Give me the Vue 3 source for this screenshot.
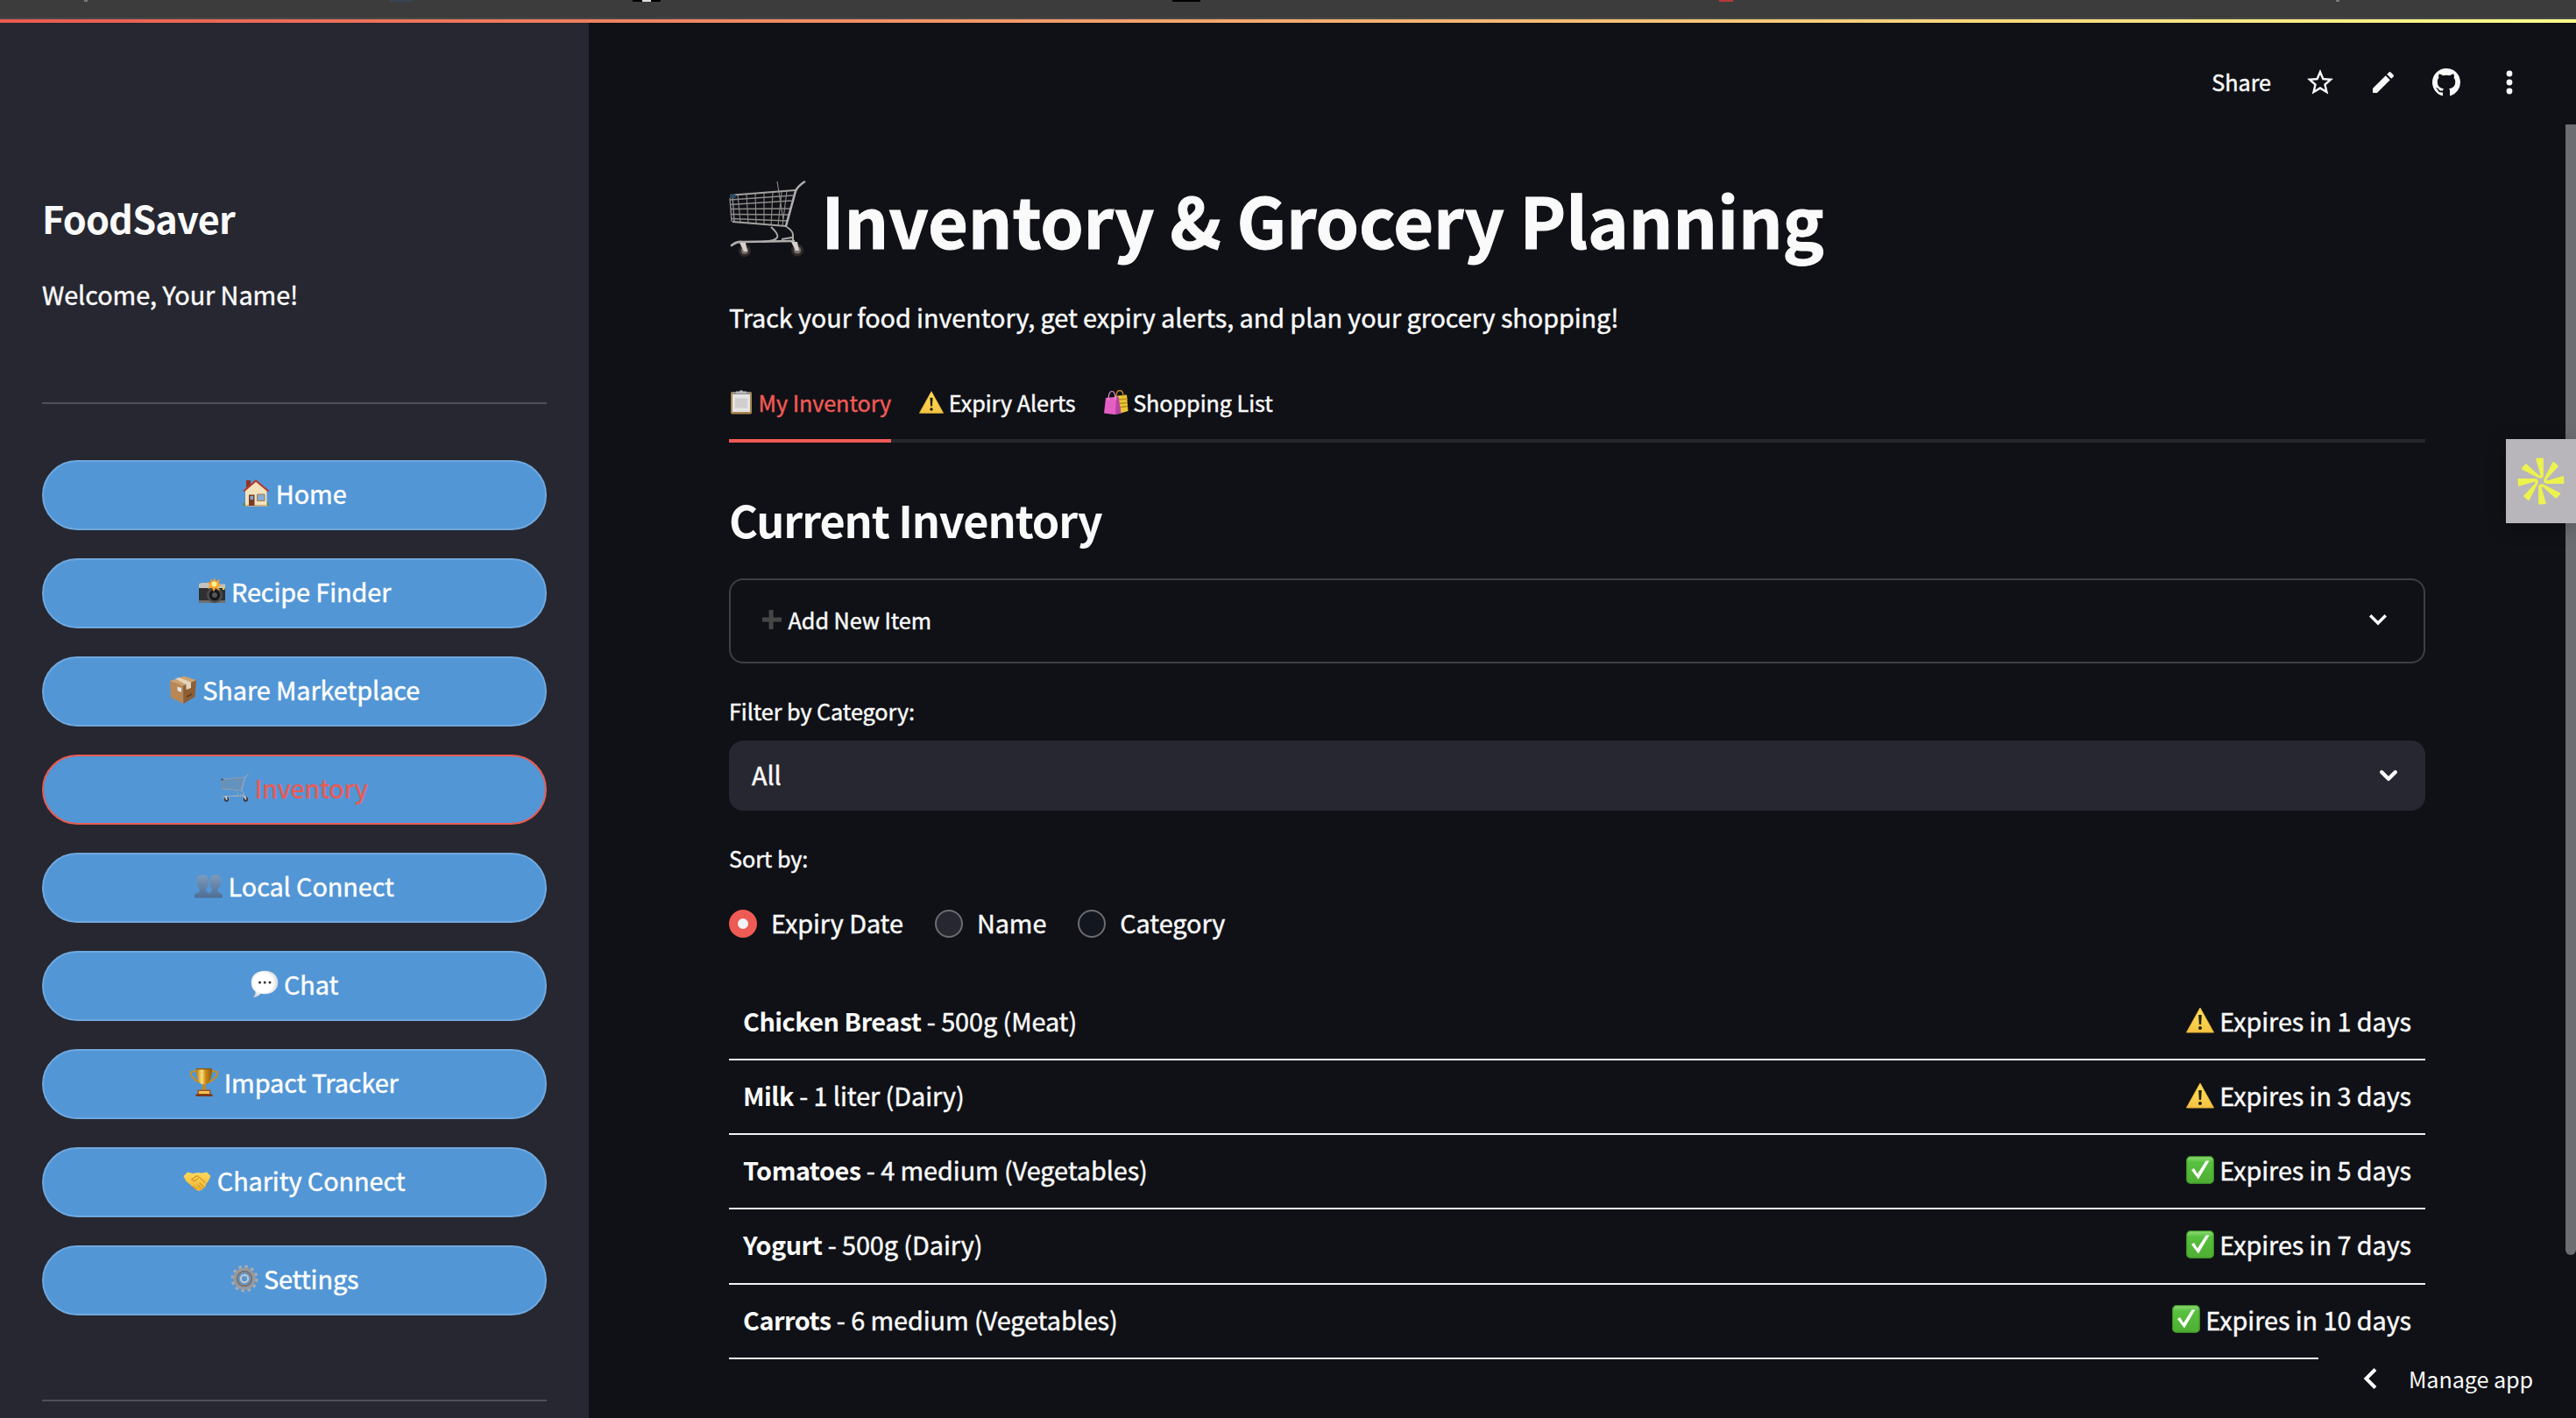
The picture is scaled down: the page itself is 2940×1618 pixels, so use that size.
<script setup>
import { ref } from 'vue'

const navItems = [
  { icon: 'house', label: 'Home' },
  { icon: 'camera', label: 'Recipe Finder' },
  { icon: 'box', label: 'Share Marketplace' },
  { icon: 'cart', label: 'Inventory' },
  { icon: 'people', label: 'Local Connect' },
  { icon: 'speech', label: 'Chat' },
  { icon: 'trophy', label: 'Impact Tracker' },
  { icon: 'handshake', label: 'Charity Connect' },
  { icon: 'gear', label: 'Settings' },
]
const activeNav = ref('Inventory')

const tabs = [
  { icon: 'clipboard', label: 'My Inventory' },
  { icon: 'warning', label: 'Expiry Alerts' },
  { icon: 'bags', label: 'Shopping List' },
]
const activeTab = ref('My Inventory')

const sortOptions = ['Expiry Date', 'Name', 'Category']
const sortBy = ref('Expiry Date')

const items = [
  { name: 'Chicken Breast', detail: '500g (Meat)', days: 1 },
  { name: 'Milk', detail: '1 liter (Dairy)', days: 3 },
  { name: 'Tomatoes', detail: '4 medium (Vegetables)', days: 5 },
  { name: 'Yogurt', detail: '500g (Dairy)', days: 7 },
  { name: 'Carrots', detail: '6 medium (Vegetables)', days: 10 },
]
const statusIcon = (days) => (days <= 3 ? 'warning' : 'check')
</script>

<template>
  <div class="page">
    <svg class="sprite" width="0" height="0" aria-hidden="true">
      <defs>
        <linearGradient id="gGold" x1="0" y1="0" x2="1" y2="0"><stop offset="0" stop-color="#b9780f" /><stop offset=".35" stop-color="#ffe27a" /><stop offset=".6" stop-color="#c98a16" /><stop offset="1" stop-color="#8f5a0c" /></linearGradient>
        <linearGradient id="gGreen" x1="0" y1="0" x2="0" y2="1"><stop offset="0" stop-color="#8fdc76" /><stop offset=".22" stop-color="#58c03f" /><stop offset="1" stop-color="#4fae33" /></linearGradient>
        <linearGradient id="gWarn" x1="0" y1="0" x2="0" y2="1"><stop offset="0" stop-color="#ffe35c" /><stop offset="1" stop-color="#f5c242" /></linearGradient>
        <linearGradient id="gPeople" x1="0" y1="0" x2="0" y2="1"><stop offset="0" stop-color="#7c9cbc" /><stop offset="1" stop-color="#4e6d95" /></linearGradient>
        <radialGradient id="gBubble" cx=".45" cy=".45" r=".6"><stop offset=".6" stop-color="#ffffff" /><stop offset="1" stop-color="#c9c9cf" /></radialGradient>
        <linearGradient id="gHand" x1="0" y1="0" x2="0" y2="1"><stop offset="0" stop-color="#ffd95c" /><stop offset="1" stop-color="#efb32f" /></linearGradient>
      </defs>
      <symbol id="cart" viewBox="0 0 88 88">
        <g fill="none" stroke="#8f8c8a" stroke-width="1.4">
          <path d="M1 22 73 17M1 27.500 71.500 23M2 32.500 70 32M2.500 38.500 68.500 39M3 43.500 67 46" />
          <path d="M10 16 13 48M20 15.500 22 49M30 15 31 50M40 14 40 51M50 13.500 48 51M60 13 56 52M66 12 61 52M55 1 62 45" stroke-width="1.100" />
          <path d="M4 17 6 47M1 20 3 47" />
        </g>
        <path d="M5 16.500 76 11M4 47 65 52" fill="none" stroke="#a5a29f" stroke-width="2" />
        <path d="M65 52 76 12Q78 7 86 1.500" fill="none" stroke="#b0aeab" stroke-width="2.600" stroke-linecap="round" />
        <path d="M48 53Q57 61 55 65Q53 69 38 70M66 53Q74 58 73 64V69M60 67 72 65" fill="none" stroke="#aaa7a5" stroke-width="2" />
        <path d="M3 74Q9 69 16 70L74 69" fill="none" stroke="#b0aeac" stroke-width="2.600" stroke-linecap="round" />
        <circle cx="18" cy="80" r="5.500" fill="#77706c" stroke="#2e2a29" stroke-width="3" />
        <circle cx="78" cy="79.500" r="5.500" fill="#77706c" stroke="#2e2a29" stroke-width="3" />
        <path d="M12 71h7l2 10h-4zM71 70h7l2 10h-4z" fill="#d6cfca" />
        <path d="M1 15.500h6.500v4.500H1z" fill="#2c4a63" />
      </symbol>
      <symbol id="house" viewBox="0 0 32 32">
        <path d="M1.500 30q0-4 4-4v4zM26 30q0-5 4.500-3.500v3.500z" fill="#5f9130" />
        <path d="M5 1h5v10H5z" fill="#8e342b" />
        <path d="M4 13 16 2.500 28.500 13v17.500H4z" fill="#f3e2bb" />
        <path d="M4 29h25v1.800H4z" fill="#c8ac86" />
        <path d="M2 13.500 16 1.500 30.500 13.500" fill="none" stroke="#b8392d" stroke-width="2.200" stroke-linejoin="round" />
        <path d="M8 17.500h6.500V30H8z" fill="#7a3b25" />
        <path d="M9.500 19h3.500v4H9.500z" fill="#7ba8d4" />
        <path d="M17.500 17h8.500v7.500h-8.500z" fill="#86aed6" stroke="#9c7a5b" />
      </symbol>
      <symbol id="camera" viewBox="0 0 32 32">
        <path d="M1 8h30v20.500H1z" fill="#2f3031" />
        <path d="M1 12V7.500L4 6h8l2 1.500h17V12z" fill="#c4c3c0" />
        <path d="M1 26h30v3H1z" fill="#6f6f70" />
        <circle cx="19" cy="20" r="9" fill="#4c4c4d" />
        <circle cx="19" cy="20" r="6.300" fill="#171819" />
        <circle cx="19" cy="20" r="3" fill="#56575b" />
        <path d="M18.500 0 20.500 4.500 25 1.500 23.500 6.500 27 9 23 10 25 15 20 12 18 16.500 16 11.500 11 13 13.500 9 10.500 5.500 15 5.500 14 1.500 17.500 4z" fill="#f7a42c" />
        <circle cx="18.500" cy="7.500" r="3" fill="#fff08f" />
        <path d="M28 11.500h2.500v2.500H28z" fill="#f1cc3a" />
      </symbol>
      <symbol id="box" viewBox="0 0 32 32">
        <path d="M1 6 16 11.500 16.500 32 2 25z" fill="#b98754" />
        <path d="M16 11.500 31 5 29.500 24 16.500 32z" fill="#8f5f33" />
        <path d="M1 6 17 .5 31 5 16 11.500z" fill="#d0a06b" />
        <path d="M7 3.500 11.500 2 25 7.500V14l-5.500 2V10z" fill="#e3d5bd" />
        <path d="M9.500 12.500 14 14v5l-4.500-2z" fill="#dfe5ea" />
        <path d="M20 23l6-3v2l-6 3z" fill="#5f3e20" />
      </symbol>
      <symbol id="people" viewBox="0 0 32 32">
        <g fill="url(#gPeople)">
          <path d="M9 3C4.500 3 2 6.500 2.500 11 3 15 5 18 6 20.500 6 24 0 24 0 27v2.500h16.500L16 24q-3-1-3-4C15 17 16 14 16 10 16 6 13 3 9 3z" />
          <path d="M23.500 3C19 3 17 6.500 17 11c.5 4 2 7 3 9 0 4-5 4-5 7v2.500h17V27c0-3-6-3-6-6.500 2-3 4.500-5.500 4.500-10C30.500 6 28 3 23.500 3z" />
        </g>
      </symbol>
      <symbol id="speech" viewBox="0 0 32 32">
        <path d="M16 .8C7 .8.700 6 .700 14c0 5 2 8.500 5 10.700 0 2-1 4.500-3 6.300 4 0 7-2 8.500-4.300 1.500.3 3 .5 4.800.5 9 0 15.300-5.200 15.300-13.200S25 .8 16 .8z" fill="url(#gBubble)" />
        <circle cx="10.500" cy="14" r="1.500" fill="#333" /><circle cx="16.200" cy="14" r="1.500" fill="#333" /><circle cx="22" cy="14" r="1.500" fill="#333" />
      </symbol>
      <symbol id="trophy" viewBox="0 0 32 32">
        <path d="M8 3.500H3q-3.500 0-1.500 5 3 5 10 7.500M24 3.500h5q3.500 0 1.500 5-3 5-10 7.500" fill="none" stroke="#c98f1e" stroke-width="2" />
        <path d="M7 0h18c0 10-2 16-7 18.500h-4C9 16 7 10 7 0z" fill="url(#gGold)" />
        <path d="M14.500 18h3l1 6.500h-5z" fill="#c48a1b" />
        <path d="M8.500 24.500h15V30h-15z" fill="#a5531f" />
        <path d="M10 26h12v3H10z" fill="#f0c455" />
        <path d="M6.500 29.500h19V32h-19z" fill="#7a3717" />
        <path d="M7 0h18v1.500H7z" fill="#8c5b0f" />
      </symbol>
      <symbol id="handshake" viewBox="0 0 32 32">
        <path d="M.5 11 5 6.500l6 1.500 5-1 5 .5 6-1L31.500 11 28 18l-2 2q1 2-1 3 0 2-2.500 2.200-.5 2-3 2-2 1.500-4-.2L6 19 3.500 17z" fill="url(#gHand)" />
        <path d="M10 14.500 16 10.500l9 7.500M13 22.500l-3 2M15.500 24l-2.500 2.500M19 19l4.500 4.500M17 21.500l4 4M10 14.500q0 3 4 1.500l3-2" fill="none" stroke="#c27f17" stroke-width="1" stroke-linecap="round" />
      </symbol>
      <symbol id="gear" viewBox="0 0 32 32">
        <circle cx="16" cy="16" r="13.700" fill="none" stroke="#a9acb0" stroke-width="3.600" stroke-dasharray="3.400 3.770" />
        <circle cx="16" cy="16" r="9.600" fill="none" stroke="#97999d" stroke-width="6" />
        <circle cx="16" cy="16" r="8.300" fill="none" stroke="#6d7074" stroke-width="1.800" />
        <circle cx="16" cy="16" r="4.200" fill="#5296d6" stroke="#c3c6ca" stroke-width="2.200" />
      </symbol>
      <symbol id="clipboard" viewBox="0 0 28 28">
        <rect x="2" y="2" width="24" height="25.500" rx="1.800" fill="#a98550" />
        <path d="M4 4h20v21H4z" fill="#e4e4e4" />
        <path d="M7 9.500h14v11H7z" fill="#cfcfcf" />
        <path d="M3.500 2.500h21V5h-21z" fill="#8d8d8f" />
        <path d="M8 1.500h4a2.300 2.300 0 0 1 4 0h4V4H8z" fill="#b8b8ba" />
      </symbol>
      <symbol id="warning" viewBox="0 0 32 32">
        <path d="M16 2 31.500 30H.5z" fill="url(#gWarn)" stroke="#e5b23a" stroke-linejoin="round" />
        <path d="M14.200 10h3.600l-.7 11h-2.200z" fill="#222009" />
        <circle cx="16" cy="25" r="2" fill="#222009" />
      </symbol>
      <symbol id="bags" viewBox="0 0 28 28">
        <path d="M12 7 26 5.500 27.500 24 19 26.500z" fill="#e9c733" />
        <path d="M15 11l12-1M16 15.500l11-1M17 20l10-1.500" stroke="#b98a1c" stroke-width="1.300" />
        <path d="M14 8q0-7.500 4-7.500t4 7" fill="none" stroke="#c7862e" stroke-width="1.300" />
        <path d="M2 9 16.500 7.500 19.500 26.500 13 28 0 26.500z" fill="#e45fc4" />
        <path d="M14 8 16.500 7.500 19.500 26.500 13 28z" fill="#b843a0" />
        <path d="M5 12q0-10.500 4-10.500t4 10" fill="none" stroke="#e39ad6" stroke-width="1.200" />
      </symbol>
      <symbol id="plus" viewBox="0 0 28 28">
        <path d="M11.600 3h5v8.500H26v5h-9.400V25h-5v-8.500H4v-5h7.600z" fill="#464646" />
      </symbol>
      <symbol id="check" viewBox="0 0 32 32">
        <rect x=".6" y=".6" width="30.800" height="30.800" rx="4.500" fill="url(#gGreen)" stroke="#3c8a28" stroke-width="1.200" />
        <path d="M6 16 9 14 13 20.500 22.500 5.500H26.500L14 26.500z" fill="#fff" />
      </symbol>
    </svg>

    <div class="browser-strip">
      <i class="sliver grey"></i><i class="sliver blue"></i><i class="sliver dark"><b></b></i><i class="sliver black"></i><i class="sliver red"></i><i class="sliver grey last"></i>
    </div>
    <div class="decoration"></div>

    <div class="app">
      <aside class="sidebar">
        <h2 class="brand">FoodSaver</h2>
        <p class="welcome">Welcome, Your Name!</p>
        <hr class="rule" />
        <nav class="nav">
          <button
            v-for="item in navItems"
            :key="item.label"
            class="nav-btn"
            :class="{ active: item.label === activeNav }"
            @click="activeNav = item.label"
          >
            <svg class="emoji"><use :href="'#' + item.icon" /></svg>
            <span>{{ item.label }}</span>
          </button>
        </nav>
        <hr class="rule bottom" />
      </aside>

      <main class="main">
        <header class="toolbar">
          <span class="share">Share</span>
          <span class="tool">
            <svg width="36" height="36" viewBox="0 0 24 24" fill="#fafafa"><path d="M22 9.240l-7.190-.62L12 2 9.190 8.630 2 9.240l5.460 4.730L5.820 21 12 17.270 18.180 21l-1.630-7.030L22 9.240zM12 15.400l-3.760 2.270 1-4.280-3.320-2.880 4.380-.38L12 6.100l1.710 4.040 4.380.38-3.320 2.880 1 4.280L12 15.400z" /></svg>
          </span>
          <span class="tool">
            <svg width="32" height="32" viewBox="0 0 24 24" fill="#fafafa"><path d="M3 17.460v3.040c0 .28.220.5.500.5h3.040c.13 0 .26-.05.350-.15L17.810 9.940l-3.750-3.750L3.150 17.100c-.1.100-.15.220-.15.360zM20.710 7.040c.39-.39.390-1.020 0-1.410l-2.340-2.340c-.39-.39-1.020-.39-1.410 0l-1.830 1.830 3.750 3.750 1.830-1.830z" /></svg>
          </span>
          <span class="tool">
            <svg width="32" height="32" viewBox="0 0 16 16" fill="#fafafa"><path d="M8 0C3.580 0 0 3.580 0 8c0 3.540 2.290 6.530 5.470 7.590.4.070.55-.17.550-.38 0-.19-.01-.82-.01-1.490-2.010.37-2.530-.49-2.690-.94-.09-.23-.48-.94-.82-1.130-.28-.15-.68-.52-.01-.53.63-.01 1.080.58 1.230.82.720 1.210 1.870.87 2.330.66.070-.52.280-.87.510-1.070-1.780-.2-3.640-.89-3.640-3.950 0-.87.310-1.590.82-2.150-.08-.2-.36-1.020.08-2.120 0 0 .67-.21 2.200.82.640-.18 1.320-.27 2-.27s1.360.09 2 .27c1.530-1.040 2.200-.82 2.200-.82.440 1.100.16 1.920.08 2.120.51.560.82 1.270.82 2.150 0 3.070-1.870 3.750-3.650 3.950.29.250.54.730.54 1.480 0 1.070-.01 1.930-.01 2.200 0 .21.150.46.550.38A8.010 8.010 0 0 0 16 8c0-4.420-3.580-8-8-8z" /></svg>
          </span>
          <span class="tool">
            <svg width="8" height="28" viewBox="0 0 8 28" fill="#fafafa"><circle cx="4" cy="4" r="3.400" /><circle cx="4" cy="14" r="3.400" /><circle cx="4" cy="24" r="3.400" /></svg>
          </span>
        </header>

        <div class="content">
          <h1 class="title"><svg class="emoji xl"><use href="#cart" /></svg><span>Inventory &amp; Grocery Planning</span></h1>
          <p class="lead">Track your food inventory, get expiry alerts, and plan your grocery shopping!</p>

          <div class="tabs">
            <button
              v-for="tab in tabs"
              :key="tab.label"
              class="tab"
              :class="{ active: tab.label === activeTab }"
              @click="activeTab = tab.label"
            >
              <svg class="emoji sm"><use :href="'#' + tab.icon" /></svg>
              <span>{{ tab.label }}</span>
            </button>
          </div>

          <h2 class="section">Current Inventory</h2>

          <div class="expander">
            <svg class="emoji sm"><use href="#plus" /></svg>
            <span>Add New Item</span>
            <svg class="chev" width="24" height="16" viewBox="0 0 24 16" fill="none" stroke="#fafafa" stroke-width="3.400"><path d="M3.200 3.200 12 12 20.800 3.200" /></svg>
          </div>

          <label class="label">Filter by Category:</label>
          <div class="select">
            <span>All</span>
            <svg class="chev" width="24" height="16" viewBox="0 0 24 16" fill="none" stroke="#fafafa" stroke-width="4.400" stroke-linecap="round" stroke-linejoin="round"><path d="M4.200 5 12 12.800 19.800 5" /></svg>
          </div>

          <label class="label">Sort by:</label>
          <div class="radios">
            <span v-for="opt in sortOptions" :key="opt" class="radio" :class="{ on: opt === sortBy, hover: opt === 'Name' }" @click="sortBy = opt">
              <i class="dot"></i><span>{{ opt }}</span>
            </span>
          </div>

          <div class="list">
            <div v-for="item in items" :key="item.name" class="row">
              <span><b>{{ item.name }}</b> - {{ item.detail }}</span>
              <span class="expiry"><svg class="emoji"><use :href="'#' + statusIcon(item.days)" /></svg><span>Expires in {{ item.days }} days</span></span>
            </div>
          </div>
        </div>
      </main>
    </div>

    <div class="scrollbar"></div>
    <div class="side-widget">
      <svg width="56" height="56" viewBox="-28 -28 56 56" fill="#ecf24e">
        <g v-for="a in [0, 90, 180, 270]" :key="a" :transform="`rotate(${a})`">
          <path d="M-6-25.800Q-1.500-26.800 2.900-26.300V-6.500Q2.500-3.200-.8-3.200-2-3.200-4-4.200L-22.500-13.800Q-20.500-17.300-17-20L-3-7.200Q-1.500-6-.9-6.600-.5-7-1-8.500z" />
        </g>
      </svg>
    </div>
    <div class="manage">
      <svg width="18" height="26" viewBox="0 0 18 26" fill="none" stroke="#fafafa" stroke-width="4"><path d="M15 2.500 4.500 13 15 23.500" /></svg>
      <span>Manage app</span>
    </div>
  </div>
</template>

<style>
body {
  background: #0f1116;
  overflow: hidden;
}
</style>

<style scoped>
.page {
  position: relative;
  width: 2940px;
  height: 1618px;
  overflow: hidden;
  display: flex;
  flex-direction: column;
  background: #0f1116;
  color: #fafafa;
  font-family: "Noto Sans CJK SC", "Noto Sans", sans-serif;
  font-size: 28.8px;
  letter-spacing: -.06px;
  -webkit-text-stroke: .45px currentColor;
}
.page * { box-sizing: border-box; }
.page svg { -webkit-text-stroke: 0; }
h1, h2, p, hr { margin: 0; }
button { font: inherit; letter-spacing: inherit; background: none; border: 0; padding: 0; color: inherit; }
span, h1, h2, p, label { white-space: nowrap; }
.sprite { position: absolute; }
.emoji { width: 32px; height: 32px; flex: none; display: block; }
.emoji.sm { width: 28px; height: 28px; }
.emoji.xl { width: 88px; height: 88px; }

.browser-strip {
  flex: none;
  height: 22px;
  background: #3c3c3c;
  border-bottom: 2px solid #474747;
  display: flex;
  align-items: flex-start;
}
.sliver { height: 2px; display: block; }
.sliver.grey { width: 4px; margin-left: 96px; background: #7a7a7a; }
.sliver.blue { width: 26px; margin-left: 345px; background: #3a4456; }
.sliver.dark { width: 32px; margin-left: 251px; background: #000; padding-left: 11px; }
.sliver.dark b { display: block; width: 10px; height: 2px; background: #ddd; }
.sliver.black { width: 32px; margin-left: 584px; background: #000; }
.sliver.red { width: 16px; margin-left: 592px; background: #b8383a; }
.sliver.last { margin-left: 688px; }
.decoration { flex: none; height: 4px; background: linear-gradient(90deg, #ea5a52, #fffd8c); }

.app { flex: 1; display: flex; min-height: 0; }
.sidebar {
  width: 672px;
  flex: none;
  background: #262730;
  padding: 193px 48px 0;
  display: flex;
  flex-direction: column;
}
.brand { height: 58px; line-height: 58px; font-size: 43.2px; font-weight: 700; letter-spacing: -.8px; -webkit-text-stroke: 0; }
.welcome { margin-top: 33px; height: 51px; line-height: 51px; }
.rule { flex: none; height: 2px; border: 0; margin-top: 98px; background: #4f5058; }
.rule.bottom { margin-top: 96px; }
.nav { margin-top: 64px; display: flex; flex-direction: column; gap: 32px; }
.nav-btn {
  height: 80px;
  border: 2px solid #70a8de;
  border-radius: 40px;
  background: #5296d6;
  color: #fff;
  display: flex;
  align-items: center;
  justify-content: center;
  gap: 6.400px;
  padding-bottom: 4px;
}
.nav-btn > span { padding-bottom: 2px; }
.nav-btn.active { border-color: #ea5a52; color: #ea5a52; }

.main { flex: 1; }
.toolbar { height: 136px; display: flex; align-items: center; justify-content: flex-end; padding-right: 40px; }
.share { font-size: 25.200px; margin-right: 20px; padding-bottom: 2px; }
.tool { width: 72px; height: 72px; display: flex; align-items: center; justify-content: center; }

.content { margin-left: 160px; width: 1936px; }
.title { margin-top: 35px; height: 106px; display: flex; align-items: center; gap: 17.600px; font-size: 79.200px; font-weight: 700; line-height: 106px; letter-spacing: -.15px; -webkit-text-stroke: 1px currentColor; }
.lead { margin-top: 33px; height: 51px; line-height: 51px; }
.tabs { margin-top: 34px; height: 84px; display: flex; gap: 32px; border-bottom: 4px solid #26272c; font-size: 25.200px; }
.tab { height: 84px; border-bottom: 4px solid transparent; padding-bottom: 4px; display: flex; align-items: center; gap: 5.600px; }
.tab.active { color: #f05a55; border-color: #f05a55; }
.section { margin-top: 54px; height: 67px; line-height: 67px; font-size: 50.400px; font-weight: 700; letter-spacing: -1.120px; -webkit-text-stroke: 0; }
.expander {
  margin-top: 34px;
  height: 97px;
  border: 2px solid #3e3f44;
  border-radius: 16px;
  padding: 0 40px 4px 32px;
  display: flex;
  align-items: center;
  gap: 5.600px;
  font-size: 25.200px;
}
.chev { margin-left: auto; flex: none; }
.label { display: block; margin-top: 34px; height: 40px; line-height: 40px; font-size: 25.200px; }
.select {
  margin-top: 14px;
  height: 80px;
  border-radius: 16px;
  background: #262730;
  padding: 0 30px 2px 26px;
  display: flex;
  align-items: center;
}
.select > span { padding-bottom: 2px; }
.radios { margin-top: 35px; height: 40px; display: flex; align-items: center; gap: 36px; }
.radio { display: flex; align-items: center; gap: 16px; }
.radio > span { padding-bottom: 3px; }
.dot { width: 32px; height: 32px; border-radius: 50%; border: 2px solid #6c6c70; background: #131720; }
.hover .dot { background: #262730; }
.on .dot { border: 10px solid #ee5a54; background: #f0f2f6; }

.list { margin-top: 50.800px; }
.row {
  height: 85.200px;
  padding: 0 16px 4px;
  border-bottom: 2px solid #f0f2f6;
  display: flex;
  align-items: center;
  justify-content: space-between;
}
.row b { font-weight: 700; letter-spacing: -.5px; -webkit-text-stroke: 0; }
.expiry { display: flex; align-items: center; gap: 6.400px; }

.scrollbar { position: absolute; right: 0; top: 142px; width: 12px; height: 1290px; background: #6c6d70; border-radius: 0 0 6px 6px; }
.side-widget {
  position: absolute;
  right: 0;
  top: 501px;
  width: 80px;
  height: 96px;
  background: #b8b6ba;
  box-shadow: 0 4px 20px rgba(0, 0, 0, .25);
  display: flex;
  align-items: center;
  justify-content: center;
}
.manage {
  position: absolute;
  right: 0;
  bottom: 0;
  width: 294px;
  height: 72px;
  background: #0f1116;
  display: flex;
  align-items: center;
  padding: 0 0 19px 50px;
  gap: 35px;
  font-size: 25.200px;
  letter-spacing: -.1px;
  -webkit-text-stroke: 0;
}
</style>
